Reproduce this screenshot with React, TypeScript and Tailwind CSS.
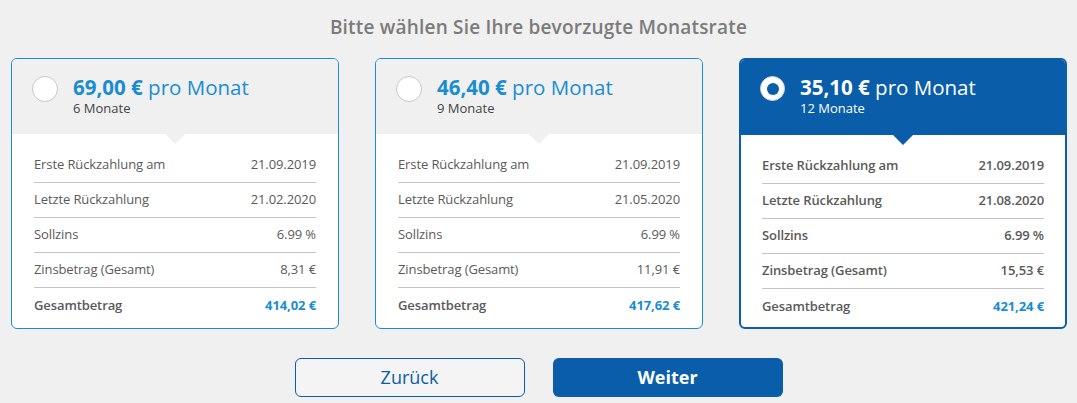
import React from "react";

type Plan = {
  amount: string;
  months: string;
  first: string;
  last: string;
  rate: string;
  interest: string;
  total: string;
  selected?: boolean;
};

const plans: Plan[] = [
  { amount: "69,00 €", months: "6 Monate", first: "21.09.2019", last: "21.02.2020", rate: "6.99 %", interest: "8,31 €", total: "414,02 €" },
  { amount: "46,40 €", months: "9 Monate", first: "21.09.2019", last: "21.05.2020", rate: "6.99 %", interest: "11,91 €", total: "417,62 €" },
  { amount: "35,10 €", months: "12 Monate", first: "21.09.2019", last: "21.08.2020", rate: "6.99 %", interest: "15,53 €", total: "421,24 €", selected: true },
];

function Row({ label, value, sel, last, total }: { label: string; value: string; sel?: boolean; last?: boolean; total?: boolean }) {
  return (
    <div
      className={
        "flex h-[35px] items-center justify-between text-[13px] tracking-[-0.1px] " +
        (last ? "" : "border-b border-[#c4c4c4] ") +
        (sel || total ? "font-semibold " : "") +
        "text-[#5a5a5a]"
      }
    >
      <span>{label}</span>
      <span className={total ? "font-bold text-[#1a8dd0]" : ""}>{value}</span>
    </div>
  );
}

function Card({ p }: { p: Plan }) {
  const sel = !!p.selected;
  return (
    <div
      className={
        "w-[328px] h-[271px] rounded-[6px] overflow-hidden bg-white flex flex-col " +
        (sel ? "border-2 border-[#0a5da8]" : "border border-[#1a8dd0]")
      }
    >
      <div
        className={
          "relative h-[75px] shrink-0 flex items-start " +
          (sel ? "bg-[#0a5da8] pl-[19px] pt-[16px]" : "bg-[#f0f0f0] pl-[20px] pt-[17px]")
        }
      >
        {sel ? (
          <div className="w-[25px] h-[25px] rounded-full bg-white border border-[#d0d0d0] flex items-center justify-center shrink-0">
            <div className="w-[12px] h-[12px] rounded-full bg-[#0a5da8]" />
          </div>
        ) : (
          <div className="w-[26px] h-[26px] rounded-full bg-white border border-[#c8c8c8] shrink-0" />
        )}
        <div className="ml-[15px] -mt-[2px] flex flex-col">
          <div className={"text-[20.5px] leading-[27px] " + (sel ? "text-white" : "text-[#1a8dd0]")}>
            <span className="font-bold">{p.amount}</span> <span>pro Monat</span>
          </div>
          <div className={"text-[13px] leading-[14px] " + (sel ? "text-white" : "text-[#444]")}>{p.months}</div>
        </div>
        <div
          className={
            "absolute left-1/2 -translate-x-1/2 top-full w-0 h-0 border-l-[10px] border-r-[10px] border-t-[10px] border-l-transparent border-r-transparent " +
            (sel ? "border-t-[#0a5da8]" : "border-t-[#f0f0f0]")
          }
        />
      </div>
      <div className={"flex flex-col pt-[14px] " + (sel ? "px-[21px]" : "px-[22px]")}>
        <Row label="Erste Rückzahlung am" value={p.first} sel={sel} />
        <Row label="Letzte Rückzahlung" value={p.last} sel={sel} />
        <Row label="Sollzins" value={p.rate} sel={sel} />
        <Row label="Zinsbetrag (Gesamt)" value={p.interest} sel={sel} />
        <Row label="Gesamtbetrag" value={p.total} sel={sel} last total />
      </div>
    </div>
  );
}

export default function App() {
  return (
    <div
      className="w-[1077px] h-[403px] bg-[#f0f0f0] flex flex-col"
      style={{ fontFamily: "'Open Sans', Lato, sans-serif" }}
    >
      <div className="pt-[13px] h-[58px] text-center text-[19px] leading-[28px] font-semibold tracking-[0.2px] text-[#7b7b7b]">
        Bitte wählen Sie Ihre bevorzugte Monatsrate
      </div>
      <div className="flex gap-[36px] pl-[11px]">
        {plans.map((p) => (
          <Card key={p.amount} p={p} />
        ))}
      </div>
      <div className="flex justify-center gap-[28px] mt-[29px]">
        <button className="w-[230px] h-[39px] rounded-[6px] border border-[#0a5da8] bg-[#f4f4f4] text-[#0a5da8] text-[18px]">
          Zurück
        </button>
        <button className="w-[230px] h-[39px] rounded-[6px] bg-[#0a5da8] text-white text-[18px] font-bold">
          Weiter
        </button>
      </div>
    </div>
  );
}
